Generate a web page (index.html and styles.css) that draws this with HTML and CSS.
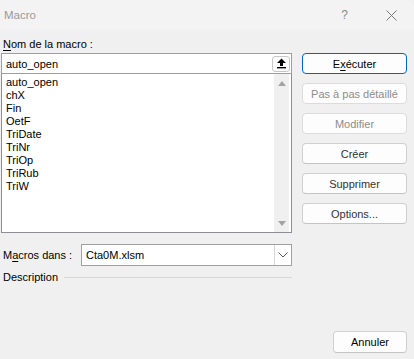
FILE: index.html
```html
<!DOCTYPE html>
<html lang="fr">
<head>
    <meta charset="UTF-8">
    <meta name="viewport" content="width=device-width, initial-scale=1.0">
    <title>Macro</title>
    <link rel="stylesheet" href="styles.css">
</head>
<body>
    <div class="dialog">
        <!-- Title bar -->
        <div class="titlebar">
            <span class="title">Macro</span>
            <span class="help">?</span>
            <svg class="close" width="11" height="11" viewBox="0 0 11 11">
                <path d="M0.5 0.5 L10.5 10.5 M10.5 0.5 L0.5 10.5" stroke="#7a7a7a" stroke-width="1" fill="none"/>
            </svg>
        </div>

        <div class="content">
            <!-- Left column -->
            <div class="left">
                <div class="label"><u>N</u>om de la macro :</div>
                <div class="name-input">
                    <span>auto_open</span>
                    <span class="up-btn">
                        <svg width="11" height="11" viewBox="0 0 11 11">
                            <path d="M5.5 0.5 L10 5 L7 5 L7 8 L4 8 L4 5 L1 5 Z" fill="#000"/>
                            <rect x="1" y="9" width="9" height="1.4" fill="#000"/>
                        </svg>
                    </span>
                </div>
                <div class="list">
                    <div class="items">
                        <div>auto_open</div>
                        <div>chX</div>
                        <div>Fin</div>
                        <div>OetF</div>
                        <div>TriDate</div>
                        <div>TriNr</div>
                        <div>TriOp</div>
                        <div>TriRub</div>
                        <div>TriW</div>
                    </div>
                    <div class="scrollbar">
                        <span class="tri up"></span>
                        <span class="tri down"></span>
                    </div>
                </div>
                <div class="macros-in">
                    <span class="label">M<u>a</u>cros dans :</span>
                    <div class="select">
                        <span class="select-text">Cta0M.xlsm</span>
                        <span class="select-btn">
                            <svg width="10" height="6" viewBox="0 0 10 6">
                                <path d="M0.5 0.5 L5 5 L9.5 0.5" stroke="#555" stroke-width="1" fill="none"/>
                            </svg>
                        </span>
                    </div>
                </div>
                <div class="description">
                    <span>Description</span>
                    <span class="rule"></span>
                </div>
            </div>

            <!-- Right column -->
            <div class="right">
                <button class="btn default">E<u>x</u>écuter</button>
                <button class="btn disabled">Pas à pas détaillé</button>
                <button class="btn disabled">Modifier</button>
                <button class="btn">Créer</button>
                <button class="btn">Supprimer</button>
                <button class="btn">Options...</button>
            </div>
        </div>

        <div class="footer">
            <button class="btn cancel">Annuler</button>
        </div>
    </div>
</body>
</html>
```

FILE: styles.css
```css
body {
    margin: 0;
    font-family: "Liberation Sans", Arial, sans-serif;
    font-size: 11px;
    color: #000;
    background-color: #f0f0f0;
}
.dialog {
    height: 359px;
    display: flex;
    flex-direction: column;
    background-color: #f0f0f0;
    overflow: hidden;
}
.titlebar {
    height: 30px;
    display: flex;
    align-items: center;
    padding-left: 4px;
    background-color: #f3f3f3;
    border-top-right-radius: 8px;
}
.title {
    color: #9a9a9a;
    font-size: 11.5px;
    flex: 1;
}
.help {
    color: #8a8a8a;
    font-size: 12px;
    margin-right: 38px;
}
.close {
    margin-right: 17px;
}
.content {
    display: flex;
    padding-top: 6px;
    padding-left: 1px;
}
.left {
    width: 291px;
}
.label {
    height: 17px;
    line-height: 16px;
    padding-left: 2px;
}
u {
    text-decoration-thickness: 1px;
    text-underline-offset: 2px;
}
.name-input {
    height: 21px;
    box-sizing: border-box;
    border: 1px solid #9e9e9e;
    background-color: #fff;
    display: flex;
    align-items: center;
    justify-content: space-between;
    padding-left: 4px;
    padding-right: 1px;
}
.up-btn {
    width: 18px;
    height: 16px;
    box-sizing: border-box;
    border: 1px solid #c8c8c8;
    border-radius: 3px;
    display: flex;
    align-items: center;
    justify-content: center;
    background-color: #fdfdfd;
}
.list {
    height: 159px;
    box-sizing: border-box;
    border: 1px solid #8e8f94;
    border-top: none;
    background-color: #fff;
    display: flex;
}
.items {
    flex: 1;
    padding: 2px 0 0 4px;
    line-height: 13px;
}
.scrollbar {
    width: 15px;
    margin-right: 2px;
    background-color: #f0f0f0;
    display: flex;
    flex-direction: column;
    justify-content: space-between;
    align-items: center;
    padding: 7px 0 6px;
}
.tri {
    width: 0;
    height: 0;
    border-left: 4px solid transparent;
    border-right: 4px solid transparent;
}
.tri.up {
    border-bottom: 5px solid #a3a3a3;
}
.tri.down {
    border-top: 5px solid #a3a3a3;
}
.macros-in {
    display: flex;
    align-items: center;
    margin-top: 11px;
}
.macros-in .label {
    width: 78px;
    height: auto;
}
.select {
    flex: 1;
    height: 22px;
    box-sizing: border-box;
    border: 1px solid #a0a0a0;
    background-color: #fff;
    display: flex;
    align-items: center;
    justify-content: space-between;
    padding-left: 4px;
}
.select-btn {
    width: 16px;
    height: 20px;
    border-left: 1px solid #d6d6d6;
    display: flex;
    align-items: center;
    justify-content: center;
}
.description {
    display: flex;
    align-items: center;
    margin-top: 3px;
    padding-left: 2px;
    line-height: 16px;
}
.rule {
    flex: 1;
    height: 1px;
    background-color: #d8d8d8;
    margin-left: 6px;
}
.right {
    display: flex;
    flex-direction: column;
    gap: 9px;
    margin-left: 10px;
    padding-top: 17px;
}
.btn {
    width: 105px;
    height: 21px;
    box-sizing: border-box;
    border: 1px solid #d0d0d0;
    border-bottom-color: #c4c4c4;
    border-radius: 4px;
    background-color: #fdfdfd;
    font-family: inherit;
    font-size: 11px;
    color: #333;
    padding: 0;
    line-height: 18px;
}
.btn.default {
    border: 1px solid #0067c0;
    color: #000;
}
.btn.disabled {
    color: #8c8c8c;
    border-color: #dcdcdc;
}
.footer {
    margin-top: auto;
    display: flex;
    justify-content: flex-end;
    padding: 0 7px 6px 0;
}
.btn.cancel {
    width: 74px;
    height: 22px;
    color: #000;
}
```
